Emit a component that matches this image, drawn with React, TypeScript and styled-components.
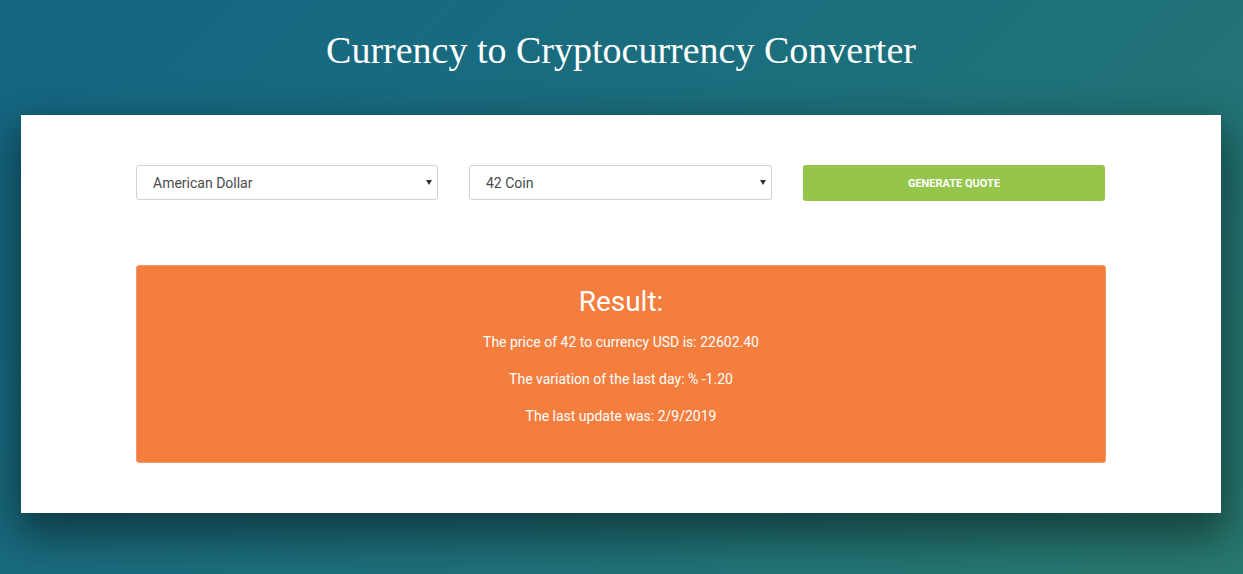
import { FC } from "react";
import styled, { createGlobalStyle } from "styled-components";

const GlobalStyle = createGlobalStyle`
  html, body {
    margin: 0;
    padding: 0;
  }
  body {
    min-height: 574px;
    background: linear-gradient(135deg, #146683 0%, #1c6f7c 50%, #28796e 100%);
    font-family: Roboto, "Noto Sans", sans-serif;
  }
`;

const Page = styled.div({
  minHeight: 574,
  display: "flex",
  flexDirection: "column",
  alignItems: "center",
  padding: "28px 1px 0 0",
  boxSizing: "border-box",
});

const Heading = styled.h1({
  margin: 0,
  fontFamily: '"Liberation Serif", "Times New Roman", serif',
  fontWeight: 400,
  fontSize: 38,
  color: "#ffffff",
  lineHeight: "44px",
});

const Card = styled.main({
  marginTop: 43,
  width: 1200,
  boxSizing: "border-box",
  background: "#ffffff",
  padding: "50px 115px 50px",
  boxShadow: "0 18px 40px 6px rgba(0, 0, 0, 0.45)",
});

const Form = styled.form({
  display: "grid",
  gridTemplateColumns: "302px 303px 302px",
  columnGap: 31,
  alignItems: "start",
});

const SelectWrap = styled.div({
  position: "relative",
});

const Select = styled.select({
  appearance: "none",
  WebkitAppearance: "none",
  width: "100%",
  height: 35,
  boxSizing: "border-box",
  border: "1px solid #cfd2d6",
  borderRadius: 3,
  background: "#ffffff",
  padding: "0 30px 0 16px",
  fontFamily: "Roboto, sans-serif",
  fontSize: 14,
  color: "#4b4b4b",
  outline: "none",
});

const Caret = styled.span({
  position: "absolute",
  right: 6,
  top: 15,
  width: 0,
  height: 0,
  borderLeft: "3.5px solid transparent",
  borderRight: "3.5px solid transparent",
  borderTop: "5px solid #333",
  pointerEvents: "none",
});

const Button = styled.button({
  height: 36,
  border: "none",
  borderRadius: 3,
  background: "#95c54b",
  color: "#ffffff",
  fontFamily: "Roboto, sans-serif",
  fontWeight: 700,
  fontSize: 11,
  textTransform: "uppercase",
  cursor: "pointer",
});

const ResultBox = styled.section({
  marginTop: 64,
  background: "#f47e3e",
  border: "1px solid #f39a6a",
  borderRadius: 3,
  padding: "20px 20px 36px",
  color: "#ffffff",
  textAlign: "center",
  display: "flex",
  flexDirection: "column",
  gap: 17,
});

const ResultTitle = styled.h2({
  margin: "0 0 -3px",
  fontFamily: "Roboto, sans-serif",
  fontWeight: 400,
  fontSize: 28,
  lineHeight: "32px",
});

const Line = styled.p({
  margin: 0,
  fontFamily: "Roboto, sans-serif",
  fontSize: 14,
  lineHeight: "20px",
});

type DropdownProps = { value: string; options: string[] };
const Dropdown: FC<DropdownProps> = ({ value, options }) => (
  <SelectWrap>
    <Select defaultValue={value}>
      {options.map((o) => (
        <option key={o} value={o}>
          {o}
        </option>
      ))}
    </Select>
    <Caret />
  </SelectWrap>
);

export default function App() {
  return (
    <>
      <GlobalStyle />
      <Page>
        <Heading>Currency to Cryptocurrency Converter</Heading>
        <Card>
          <Form onSubmit={(e) => e.preventDefault()}>
            <Dropdown value="American Dollar" options={["American Dollar", "Euro", "Pound Sterling"]} />
            <Dropdown value="42 Coin" options={["42 Coin", "Bitcoin", "Ethereum"]} />
            <Button type="submit">Generate Quote</Button>
          </Form>
          <ResultBox>
            <ResultTitle>Result:</ResultTitle>
            <Line>The price of 42 to currency USD is: 22602.40</Line>
            <Line>The variation of the last day: % -1.20</Line>
            <Line>The last update was: 2/9/2019</Line>
          </ResultBox>
        </Card>
      </Page>
    </>
  );
}
